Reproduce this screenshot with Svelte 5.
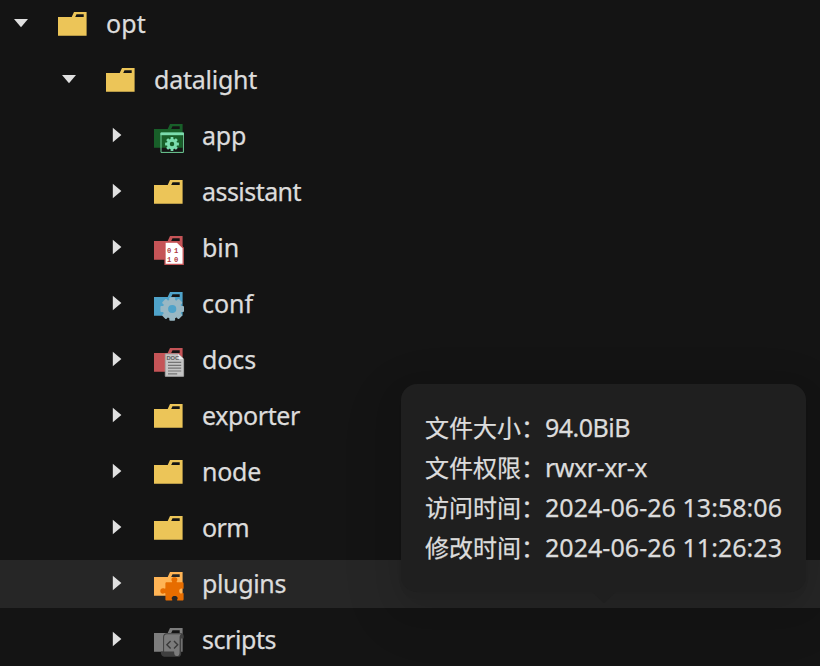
<script>
  const rows = [
    { name: 'opt', level: 0, open: true, width: 40 },
    { name: 'datalight', level: 1, open: true, width: 103 },
    { name: 'app', level: 2, kind: 'app', color: '#185f29', width: 44 },
    { name: 'assistant', level: 2, width: 99 },
    { name: 'bin', level: 2, kind: 'bin', color: '#c55457', width: 37 },
    { name: 'conf', level: 2, kind: 'conf', color: '#4fa3ca', width: 51 },
    { name: 'docs', level: 2, kind: 'docs', color: '#c55457', width: 54 },
    { name: 'exporter', level: 2, width: 98 },
    { name: 'node', level: 2, width: 59 },
    { name: 'orm', level: 2, width: 47 },
    { name: 'plugins', level: 2, kind: 'plugins', color: '#ffb455', width: 84, active: true },
    { name: 'scripts', level: 2, kind: 'scripts', color: '#7d7d7d', width: 74 }
  ];
  const details = [
    { label: '文件大小：', value: '94.0BiB', width: 85 },
    { label: '文件权限：', value: 'rwxr-xr-x', width: 102 },
    { label: '访问时间：', value: '2024-06-26 13:58:06', width: 237 },
    { label: '修改时间：', value: '2024-06-26 11:26:23', width: 237 }
  ];
  const teeth = [0, 45, 90, 135, 180, 225, 270, 315];

  // Spread the glyphs so that a label takes its intended width.
  function fit(node, width) {
    const natural = node.getBoundingClientRect().width;
    node.style.letterSpacing = `${(width - natural) / node.textContent.length}px`;
  }
</script>

<main>
  {#each rows as row}
    <div class="row level{row.level}" class:active={row.active}>
      <svg class="caret" viewBox="0 0 16 16">
        {#if row.open}
          <path d="M1 4h14L8 12.2z" />
        {:else}
          <path d="M3.8 0.8v14.4L12.4 8z" />
        {/if}
      </svg>
      <svg class="icon" viewBox="0 0 34 34">
        <path
          fill={row.color ?? '#ecc558'}
          fill-rule="evenodd"
          d="M2 26.8V8h13.7L18 3.1h12.6v23.7zM19.2 7.9h8.5V5.3h-7.2z"
        />
        {#if row.kind === 'app'}
          <path d="M9 12h22.4v19.4H9z" fill="none" stroke="#6fcf98" />
          <path d="M8.5 11.6h23.4v2.6H8.5z" fill="#7bdcae" />
          <g transform="translate(20 23)" fill="#7bdcae">
            {#each teeth as t}
              <rect x="-1.4" y="-6.9" width="2.8" height="3.5" rx=".5" transform="rotate({t})" />
            {/each}
            <circle r="3.7" fill="none" stroke="#7bdcae" stroke-width="2.9" />
          </g>
        {:else if row.kind === 'bin'}
          <path d="M13 9.2h12.5l5.7 5.7v16.4H13z" fill="#fff" stroke="#c55457" stroke-width="1.3" />
          <path d="M25.5 8.6l6.3 6.3h-1.3L25.5 10z" fill="#c55457" />
          <text class="bits" x="15" y="20.3">01</text>
          <text class="bits" x="15" y="28.7">10</text>
        {:else if row.kind === 'conf'}
          <g transform="translate(20.2 20)" fill="#99b8c4">
            {#each teeth as t}
              <rect x="-2.9" y="-11.8" width="5.8" height="5" rx="1" transform="rotate({t})" />
            {/each}
            <circle r="6.8" fill="none" stroke="#99b8c4" stroke-width="5.4" />
          </g>
        {:else if row.kind === 'docs'}
          <path d="M13.3 9h13l5.3 5v17.3H13.3z" fill="#c5c5c5" stroke="#a4a4a4" />
          <path d="M26.2 9v5h5.4z" fill="#eee" />
          <text class="doc" x="14.4" y="15.2">DOC</text>
          <path d="M16 17.4h13.2M16 20.3h13.2M16 23.1h13.2M16 26h13.2M16 28.8h9.2" stroke="#747474" stroke-width="1.2" />
        {:else if row.kind === 'plugins'}
          <path
            fill="#e76d00"
            d="M13.4 14.7c0-1 .4-1.4 1.4-1.4h4.8c.6 0 .7-.4.4-1-1.4-2.7.2-4.1 2.4-4.1s4 1.5 2.4 4.1c-.4.6-.2 1 .5 1h4.9c1 0 1.4.4 1.4 1.4v4.4c0 .8-.4 1-1 .6-1.6-.8-3.5-.1-3.5 2.3s2 3.2 3.7 2.1c.5-.3.8 0 .8.7v5.3c0 1.1-.4 1.5-1.4 1.5h-4.4c-.7 0-1-.4-.6-1 1.1-1.8.2-3.7-2.5-3.7s-3.6 1.9-2.5 3.7c.3.6.1 1-.6 1h-4.8c-1 0-1.4-.4-1.4-1.4v-5.4c0-.7-.3-.9-.9-.6-2 1.1-4.2.2-4.2-2.2s2-3.4 4.1-2.4c.6.3 1 .1 1-.6z"
          />
        {:else if row.kind === 'scripts'}
          <path d="M14.8 8.2h14.2c2.4 0 3.2 2.2 2.6 5.2h-2.4v15c0 2.3-1.2 3.4-3.3 3.4H13.5c-3.3 0-4.9-2.2-4.6-5.4h2.2V12c0-2.4 1.4-3.8 3.7-3.8z" fill="#3f3f3f" />
          <path d="M15 9.2h14.2c-1 .6-1.6 1.7-1.6 3.4v14.8c0 2.4-1 3.6-2.9 3.6-1.8 0-2.6-1.4-2.6-4.6h-10V12.2c0-2 1-3 2.9-3z" fill="#7b7b7b" />
          <path d="M18.6 16l-3.7 3.7 3.7 3.7M22 16l3.7 3.7-3.7 3.7" fill="none" stroke="#3a3a3a" stroke-width="1.4" />
        {/if}
      </svg>
      <span class="name" use:fit={row.width}>{row.name}</span>
    </div>
  {/each}

  <aside>
    {#each details as line}
      <div class="line">
        <span class="label">{line.label}</span><span use:fit={line.width}>{line.value}</span>
      </div>
    {/each}
  </aside>
</main>

<style>
  :global(body) {
    background: #141414;
    overflow: hidden;
  }
  main {
    position: relative;
    height: 666px;
    overflow: hidden;
    background: #141414;
    color: #dcdcdc;
    font: 25px 'Noto Sans', 'Noto Sans CJK SC', sans-serif;
    -webkit-text-stroke: 0.25px #dcdcdc;
  }
  .row {
    display: flex;
    align-items: center;
    height: 48px;
    margin-bottom: 8px;
    padding-left: 13px;
  }
  .level1 {
    padding-left: 61px;
  }
  .level2 {
    padding-left: 109px;
  }
  .active {
    background: #262626;
  }
  .caret {
    width: 16px;
    height: 16px;
    margin-top: -2px;
    fill: #e0e0e0;
  }
  .icon {
    width: 34px;
    height: 34px;
    margin: 4px 16px 0 27px;
    -webkit-text-stroke: 0;
  }
  .name {
    line-height: 46px;
    margin-bottom: 2px;
    white-space: nowrap;
  }
  .bits {
    font: bold 7.2px 'Liberation Mono', monospace;
    letter-spacing: 2.7px;
    fill: #b0383e;
  }
  .doc {
    font: bold 5.8px 'Liberation Sans', sans-serif;
    fill: #5c5c5c;
  }
  aside {
    position: absolute;
    left: 401px;
    top: 384px;
    width: 405px;
    height: 208px;
    box-sizing: border-box;
    padding: 23px 24px 25px;
    border-radius: 16px;
    background: #1f1f1f;
    box-shadow:
      0 12px 32px rgba(0, 0, 0, 0.08),
      0 6px 12px -8px rgba(0, 0, 0, 0.12),
      0 18px 56px 16px rgba(0, 0, 0, 0.05);
  }
  aside::after {
    content: '';
    position: absolute;
    left: 191px;
    top: 208px;
    width: 24px;
    height: 11px;
    background: #1f1f1f;
    clip-path: polygon(0 0, 100% 0, 58% 85%, 50% 100%, 42% 85%);
  }
  .line {
    display: flex;
    height: 40px;
    line-height: 40px;
    white-space: nowrap;
  }
  .label {
    width: 120px;
    font-family: 'Noto Sans CJK SC', sans-serif;
    font-size: 24px;
  }
</style>
